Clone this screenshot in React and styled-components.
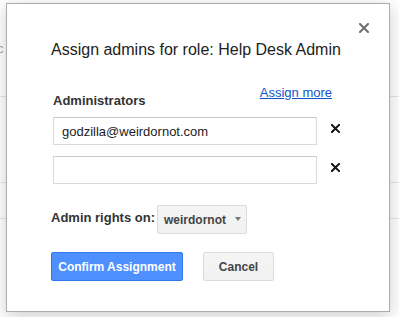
import styled, { createGlobalStyle } from "styled-components";

const GlobalStyle = createGlobalStyle`
    * { box-sizing: border-box; }
    body {
        margin: 0;
        font-family: "Liberation Sans", Arial, sans-serif;
        background: #fff;
    }
`;

function CrossIcon({ size, weight }) {
    return (
        <svg width={size} height={size} viewBox="0 0 10 10">
            <path d="M1 1 L9 9 M9 1 L1 9" stroke="currentColor" strokeWidth={weight} strokeLinecap="square" fill="none" />
        </svg>
    );
}

export default function App() {
    return (
        <>
            <GlobalStyle />
            <Page>
                <BgRow h={97}><BgText>c</BgText></BgRow>
                <BgRow h={86} />
                <BgRow h={36} />

                <Dialog role="dialog">
                    <Close aria-label="Close"><CrossIcon size={10} weight={2} /></Close>
                    <Title>Assign admins for role: Help Desk Admin</Title>

                    <Section>
                        <LabelRow>
                            <Label>Administrators</Label>
                            <MoreLink href="#">Assign more</MoreLink>
                        </LabelRow>
                        <InputRow>
                            <Input defaultValue="godzilla@weirdornot.com" />
                            <Remove aria-label="Remove"><CrossIcon size={9} weight={2.2} /></Remove>
                        </InputRow>
                        <InputRow>
                            <Input defaultValue="" />
                            <Remove aria-label="Remove"><CrossIcon size={9} weight={2.2} /></Remove>
                        </InputRow>
                    </Section>

                    <RightsRow>
                        <RightsLabel>Admin rights on:</RightsLabel>
                        <Dropdown>
                            weirdornot
                            <Arrow />
                        </Dropdown>
                    </RightsRow>

                    <Actions>
                        <Button primary w={132}>Confirm Assignment</Button>
                        <Button w={71}>Cancel</Button>
                    </Actions>
                </Dialog>
            </Page>
        </>
    );
}

const Page = styled.div`
    position: relative;
    width: 399px;
    height: 317px;
    overflow: hidden;
    background: #fff;
`;

const BgRow = styled.div`
    height: ${props => props.h}px;
    border-bottom: 1px solid #e6e6e6;
    display: flex;
    align-items: flex-start;
`;

const BgText = styled.span`
    margin: 41px 0 0 -3px;
    font-size: 13px;
    color: #aaa;
`;

const Dialog = styled.div`
    position: absolute;
    left: 6px;
    top: 3px;
    width: 384px;
    height: 309px;
    background: #fff;
    border: 1px solid #acacac;
    box-shadow: 0 4px 16px rgba(0, 0, 0, 0.2);
    padding: 36px 0 0 44px;
    display: flex;
    flex-direction: column;
    align-items: flex-start;
`;

const Close = styled.span`
    position: absolute;
    top: 19px;
    right: 20px;
    width: 10px;
    height: 10px;
    display: flex;
    color: #6e6e6e;
    cursor: pointer;
`;

const Title = styled.h1`
    margin: 0;
    font-size: 16px;
    line-height: 20px;
    font-weight: normal;
    color: #222;
`;

const Section = styled.div`
    margin-top: 25px;
    padding-left: 2px;
    display: flex;
    flex-direction: column;
    gap: 11px;
`;

const LabelRow = styled.div`
    width: 279px;
    display: flex;
    justify-content: space-between;
    align-items: flex-start;
    margin-bottom: -3px;
`;

const Label = styled.span`
    padding-top: 8px;
    font-size: 13px;
    line-height: 16px;
    font-weight: bold;
    color: #333;
`;

const MoreLink = styled.a`
    font-size: 13px;
    line-height: 16px;
    color: #15c;
    text-decoration: underline;
`;

const InputRow = styled.div`
    display: flex;
    align-items: center;
    gap: 14px;
`;

const Input = styled.input`
    width: 264px;
    height: 28px;
    margin: 0;
    padding: 0 8px;
    border: 1px solid #d9d9d9;
    border-top-color: #c8c8c8;
    border-radius: 1px;
    font-family: inherit;
    font-size: 13px;
    color: #222;
    outline: none;
`;

const Remove = styled.span`
    display: flex;
    margin-bottom: 6px;
    color: #111;
    cursor: pointer;
`;

const RightsRow = styled.div`
    margin-top: 21px;
    display: flex;
    align-items: center;
    gap: 2px;
`;

const RightsLabel = styled.span`
    margin-bottom: 3px;
    font-size: 13px;
    line-height: 16px;
    font-weight: bold;
    color: #333;
`;

const Dropdown = styled.div`
    width: 90px;
    height: 29px;
    padding: 0 5px 0 6px;
    display: flex;
    align-items: center;
    justify-content: space-between;
    background: linear-gradient(#f5f5f5, #f1f1f1);
    border: 1px solid #dcdcdc;
    border-radius: 2px;
    font-size: 12px;
    font-weight: bold;
    color: #444;
    cursor: default;
`;

const Arrow = styled.span`
    width: 0;
    height: 0;
    border-left: 3px solid transparent;
    border-right: 3px solid transparent;
    border-top: 4px solid #777;
    margin-bottom: 1px;
`;

const Actions = styled.div`
    margin-top: 18px;
    display: flex;
    gap: 20px;
`;

const Button = styled.button`
    width: ${props => props.w}px;
    height: 29px;
    padding: 0;
    border-radius: 2px;
    font-family: inherit;
    font-size: 12px;
    font-weight: bold;
    cursor: pointer;
    color: ${props => props.primary ? "#fff" : "#444"};
    background: ${props => props.primary ? "#4d90fe" : "linear-gradient(#f5f5f5, #f1f1f1)"};
    border: 1px solid ${props => props.primary ? "#3079ed" : "#dcdcdc"};
`;
